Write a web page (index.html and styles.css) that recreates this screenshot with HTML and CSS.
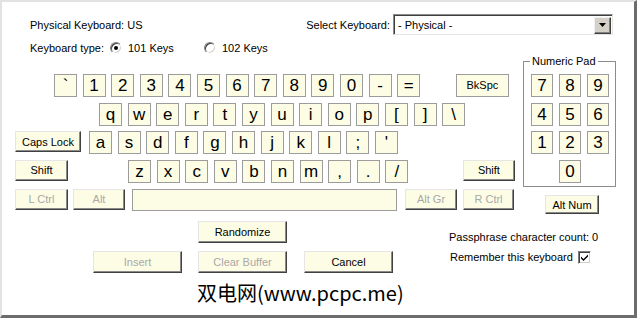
FILE: index.html
```html
<!DOCTYPE html>
<html lang="en">
<head>
    <meta charset="UTF-8">
    <title>Keyboard</title>
    <link rel="stylesheet" href="styles.css">
</head>
<body>
    <div class="dialog">
        <div class="top">
            <span>Physical Keyboard: US</span>
            <div class="picker">
                <span class="picker-label">Select Keyboard:</span>
                <div class="select">
                    <span class="select-value">- Physical -</span>
                    <span class="select-btn">
                        <svg width="7" height="4" viewBox="0 0 7 4"><path d="M0 0h7L3.5 4z" fill="#000"/></svg>
                    </span>
                </div>
            </div>
        </div>

        <div class="type">
            <span class="type-label">Keyboard type:</span>
            <span class="opt"><span class="radio on"></span>101 Keys</span>
            <span class="opt"><span class="radio"></span>102 Keys</span>
        </div>

        <div class="board">
            <div class="keys">
                <div class="row r1">
                    <span class="key">`</span><span class="key">1</span><span class="key">2</span><span class="key">3</span>
                    <span class="key">4</span><span class="key">5</span><span class="key">6</span><span class="key">7</span>
                    <span class="key">8</span><span class="key">9</span><span class="key">0</span><span class="key">-</span>
                    <span class="key">=</span>
                    <span class="key wide bksp">BkSpc</span>
                </div>
                <div class="row r2">
                    <span class="key">q</span><span class="key">w</span><span class="key">e</span><span class="key">r</span>
                    <span class="key">t</span><span class="key">y</span><span class="key">u</span><span class="key">i</span>
                    <span class="key">o</span><span class="key">p</span><span class="key">[</span><span class="key">]</span>
                    <span class="key">\</span>
                </div>
                <div class="row r3">
                    <span class="btn caps">Caps Lock</span>
                    <span class="key">a</span><span class="key">s</span><span class="key">d</span><span class="key">f</span>
                    <span class="key">g</span><span class="key">h</span><span class="key">j</span><span class="key">k</span>
                    <span class="key">l</span><span class="key">;</span><span class="key">'</span>
                </div>
                <div class="row r4">
                    <span class="btn lshift">Shift</span>
                    <span class="key">z</span><span class="key">x</span><span class="key">c</span><span class="key">v</span>
                    <span class="key">b</span><span class="key">n</span><span class="key">m</span><span class="key">,</span>
                    <span class="key">.</span><span class="key">/</span>
                    <span class="btn rshift">Shift</span>
                </div>
                <div class="row r5">
                    <span class="btn off lctrl">L Ctrl</span>
                    <span class="btn off alt">Alt</span>
                    <span class="key space"></span>
                    <span class="btn off altgr">Alt Gr</span>
                    <span class="btn off rctrl">R Ctrl</span>
                </div>
            </div>

            <div class="numcol">
                <div class="numpad">
                    <span class="legend">Numeric Pad</span>
                    <div class="numgrid">
                        <span class="key">7</span><span class="key">8</span><span class="key">9</span>
                        <span class="key">4</span><span class="key">5</span><span class="key">6</span>
                        <span class="key">1</span><span class="key">2</span><span class="key">3</span>
                        <span class="key zero">0</span>
                    </div>
                </div>
                <span class="btn altnum">Alt Num</span>
            </div>
        </div>

        <div class="footer">
            <div class="actions">
                <div class="rand"><span class="btn act">Randomize</span></div>
                <div class="act-row">
                    <span class="btn act off">Insert</span>
                    <span class="btn act off">Clear Buffer</span>
                    <span class="btn act cancel">Cancel</span>
                </div>
            </div>
            <div class="info">
                <div class="count">Passphrase character count: 0</div>
                <div class="remember">
                    <span class="remember-label">Remember this keyboard</span>
                    <span class="check">
                        <svg width="7" height="7" viewBox="0 0 7 7"><path d="M0 2.5l2.5 2.5L7 0.5v2L2.5 7 0 4.5z" fill="#000"/></svg>
                    </span>
                </div>
            </div>
        </div>

        <div class="mark">双电网(www.pcpc.me)</div>
    </div>
</body>
</html>
```

FILE: styles.css
```css
* {
    box-sizing: border-box;
}

body {
    margin: 0;
    background-color: #fff;
    font-family: "Liberation Sans", Arial, sans-serif;
    font-size: 11px;
    color: #000;
}

.dialog {
    width: 637px;
    height: 318px;
    border-style: solid;
    border-width: 2px 3px 3px 2px;
    border-color: #e2e2e2 #6c6c6c #6c6c6c #e2e2e2;
    background-color: #fff;
    overflow: hidden;
}

/* header */
.top {
    display: flex;
    align-items: center;
    height: 21px;
    margin-top: 12px;
    padding-left: 28px;
}

.picker {
    display: flex;
    align-items: center;
    margin-left: auto;
    margin-right: 21px;
}

.picker-label {
    margin-right: 3px;
}

.select {
    display: flex;
    align-items: center;
    width: 220px;
    height: 21px;
    border: 1px solid;
    border-color: #8a8a8a #e4e4e4 #e4e4e4 #8a8a8a;
    box-shadow: inset 1px 1px #404040;
    background-color: #fff;
    padding: 1px 1px 0 1px;
}

.select-value {
    flex: 1;
    padding-left: 3px;
}

.select-btn {
    display: flex;
    align-items: center;
    justify-content: center;
    width: 17px;
    height: 17px;
    background-color: #d4d0c8;
    border: 1px solid;
    border-color: #f0f0f0 #404040 #404040 #f0f0f0;
    box-shadow: inset -1px -1px #808080;
}

/* keyboard type */
.type {
    display: flex;
    align-items: center;
    height: 14px;
    margin-top: 6px;
    padding-left: 28px;
}

.type-label {
    width: 80px;
}

.opt {
    display: flex;
    align-items: center;
    width: 94px;
}

.radio {
    position: relative;
    width: 12px;
    height: 12px;
    margin-right: 6px;
    border-radius: 50%;
    border: 1px solid;
    border-color: #808080 #fff #fff #808080;
    box-shadow: inset 1px 1px #404040, inset -1px -1px #d4d0c8;
    background-color: #fff;
}

.radio.on::after {
    content: "";
    position: absolute;
    left: 3px;
    top: 3px;
    width: 4px;
    height: 4px;
    border-radius: 50%;
    background-color: #000;
}

/* keys */
.board {
    display: flex;
    margin-top: 6px;
    padding-left: 13px;
}

.keys {
    display: flex;
    flex-direction: column;
    gap: 5.67px;
    width: 508px;
    padding-top: 13px;
}

.row {
    display: flex;
    align-items: flex-start;
    gap: 5.6px;
    height: 23px;
}

.key {
    display: flex;
    align-items: center;
    justify-content: center;
    width: 23px;
    height: 23px;
    border: 1px solid #9c9c9c;
    background-color: #fdfde6;
    font-size: 17px;
    line-height: 1;
}

.key.wide {
    width: 53px;
    font-size: 11px;
}

.btn {
    display: flex;
    align-items: center;
    justify-content: center;
    height: 21px;
    border: 1px solid;
    border-color: #e6e6e6 #404040 #404040 #e6e6e6;
    box-shadow: inset -1px -1px #8a8a8a;
    background-color: #fdfde6;
    font-size: 11px;
}

.btn.off {
    color: #a8a8a8;
}

.r1 {
    padding-left: 39px;
}

.bksp {
    margin-left: 30.2px;
}

.r2 {
    padding-left: 84px;
}

.caps {
    width: 66px;
    margin-right: 2.4px;
}

.lshift {
    width: 53px;
    margin-right: 54.4px;
}

.rshift {
    width: 52px;
    margin-left: 49px;
}

.r5 {
    gap: 0;
}

.lctrl {
    width: 53px;
}

.alt {
    width: 52px;
    margin-left: 5px;
}

.key.space {
    width: 265px;
    height: 22px;
    margin-left: 7px;
}

.altgr {
    width: 52px;
    margin-left: 8px;
}

.rctrl {
    width: 51px;
    margin-left: 6px;
}

/* numeric pad */
.numcol {
    display: flex;
    flex-direction: column;
}

.numpad {
    position: relative;
    width: 93px;
    height: 126px;
    border: 1px solid #8c8c8c;
    padding: 12px 0 0 7px;
}

.legend {
    position: absolute;
    top: -7px;
    left: 6px;
    padding: 0 2px;
    line-height: 13px;
    background-color: #fff;
}

.numgrid {
    display: grid;
    grid-template-columns: repeat(3, 22px);
    column-gap: 6px;
    row-gap: 5.67px;
}

.numgrid .key {
    width: 22px;
}

.numgrid .zero {
    grid-column: 2;
}

.altnum {
    width: 54px;
    height: 19px;
    margin: 8px 0 0 22px;
}

/* footer */
.footer {
    display: flex;
    margin-top: 7px;
}

.actions {
    width: 447px;
}

.rand {
    display: flex;
    padding-left: 196px;
}

.act {
    width: 89px;
    height: 22px;
}

.act-row {
    display: flex;
    gap: 16px;
    margin-top: 8px;
    padding-left: 91px;
}

.cancel {
    margin-left: 1px;
}

.info {
    padding-top: 9px;
    line-height: 14px;
}

.remember {
    display: flex;
    align-items: center;
    margin-top: 6px;
    padding-left: 1px;
}

.remember-label {
    width: 128px;
}

.check {
    display: flex;
    align-items: center;
    justify-content: center;
    width: 13px;
    height: 13px;
    border: 1px solid;
    border-color: #808080 #fff #fff #808080;
    box-shadow: inset 1px 1px #404040, inset -1px -1px #d4d0c8;
    background-color: #fff;
}

.mark {
    margin-top: 8px;
    padding-left: 195px;
    font-family: "Noto Sans CJK SC", "Liberation Sans", sans-serif;
    font-size: 20px;
    line-height: 24px;
}
```
